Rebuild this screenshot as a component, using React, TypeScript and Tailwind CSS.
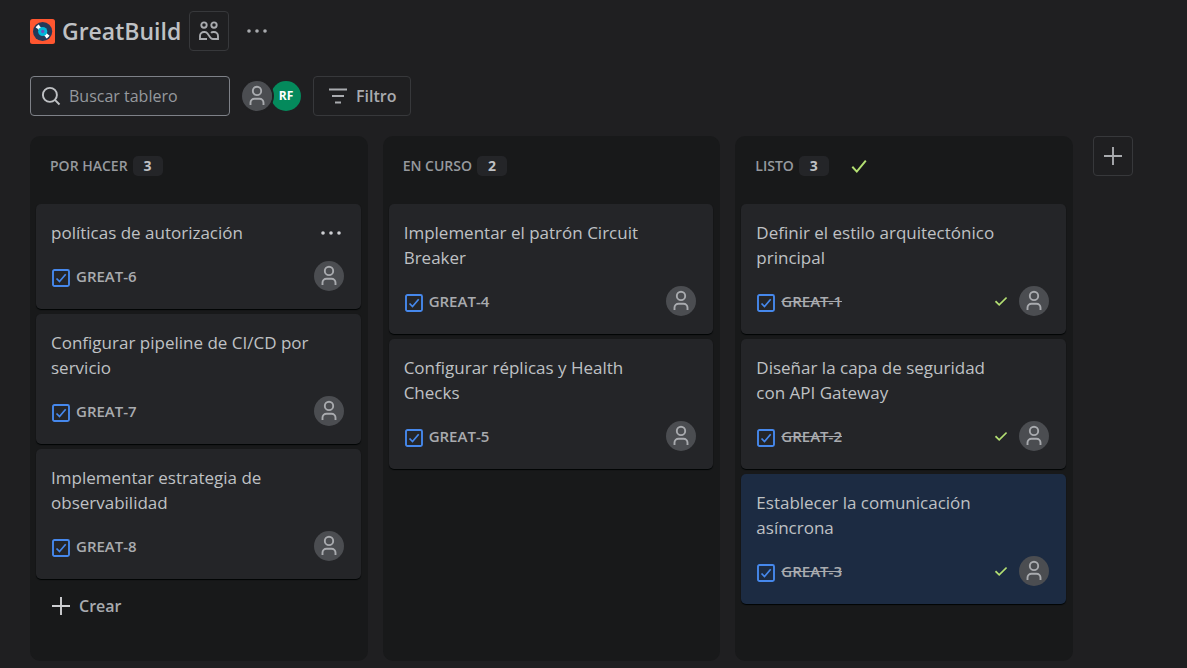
import React from "react";

type Task = { title: string; id: string; done?: boolean; selected?: boolean; menu?: boolean };
type Column = { name: string; tasks: Task[]; done?: boolean; create?: boolean };

const columns: Column[] = [
  {
    name: "POR HACER",
    create: true,
    tasks: [
      { title: "políticas de autorización", id: "GREAT-6", menu: true },
      { title: "Configurar pipeline de CI/CD por servicio", id: "GREAT-7" },
      { title: "Implementar estrategia de observabilidad", id: "GREAT-8" },
    ],
  },
  {
    name: "EN CURSO",
    tasks: [
      { title: "Implementar el patrón Circuit Breaker", id: "GREAT-4" },
      { title: "Configurar réplicas y Health Checks", id: "GREAT-5" },
    ],
  },
  {
    name: "LISTO",
    done: true,
    tasks: [
      { title: "Definir el estilo arquitectónico principal", id: "GREAT-1", done: true },
      { title: "Diseñar la capa de seguridad con API Gateway", id: "GREAT-2", done: true },
      { title: "Establecer la comunicación asíncrona", id: "GREAT-3", done: true, selected: true },
    ],
  },
];

function Logo() {
  return (
    <svg viewBox="0 0 25 25" className="size-[25px] shrink-0" aria-hidden="true">
      <rect width="25" height="25" rx="2.5" fill="#ff5630" />
      <circle cx="12.6" cy="12.5" r="9.6" fill="#253858" />
      <path d="M7.6 7.4 17.8 17.8" stroke="#fff" strokeWidth="3.4" />
      <path d="M6.2 8.8 9 6M16.2 19l2.8-2.800" stroke="#fff" strokeWidth="1.6" />
      <circle cx="12.7" cy="12.5" r="4.6" fill="#00b8d9" />
      <circle cx="12.7" cy="12.5" r="1.7" fill="#6554c0" />
    </svg>
  );
}

function PeopleIcon() {
  return (
    <svg viewBox="0 0 20 20" className="size-5" fill="none" stroke="currentColor" strokeWidth="1.9" aria-hidden="true">
      <circle cx="5" cy="4.1" r="2.7" />
      <circle cx="15" cy="4.1" r="2.7" />
      <path d="M8 18H1v-3a4 4 0 0 1 4-4h.8c1.2 0 2 .5 2.7 1.5l2.8 4c.7 1 1.5 1.5 2.6 1.5H19v-3a4 4 0 0 0-4-4h-.8c-.9 0-1.6.2-2.2.8" />
    </svg>
  );
}

function Dots() {
  return (
    <svg viewBox="0 0 20 4" className="h-1 w-5" fill="currentColor" aria-hidden="true">
      <circle cx="2" cy="2" r="1.8" />
      <circle cx="10" cy="2" r="1.8" />
      <circle cx="18" cy="2" r="1.8" />
    </svg>
  );
}

function SearchIcon() {
  return (
    <svg viewBox="0 0 20 20" className="size-5 shrink-0" fill="none" stroke="currentColor" strokeWidth="1.9" aria-hidden="true">
      <circle cx="8.9" cy="8.9" r="7" />
      <path d="m13.900 13.900 4.600 4.600" />
    </svg>
  );
}

function FilterIcon() {
  return (
    <svg viewBox="0 0 20 20" className="size-5" fill="none" stroke="currentColor" strokeWidth="1.9" aria-hidden="true">
      <path d="M1 3.500h18M4 10h12M7 16.500h6" />
    </svg>
  );
}

function PlusIcon() {
  return (
    <svg viewBox="0 0 20 20" className="size-5" fill="none" stroke="currentColor" strokeWidth="1.9" aria-hidden="true">
      <path d="M10 1v18M1 10h18" />
    </svg>
  );
}

function ColumnCheck() {
  return (
    <svg viewBox="0 0 16 16" className="ml-[22px] size-4" fill="none" stroke="#b3df72" strokeWidth="2" aria-hidden="true">
      <path d="M1.300 8.800 5.800 13.600 14.800 2.600" />
    </svg>
  );
}

function TaskCheck() {
  return (
    <svg viewBox="0 0 12 12" className="size-3" fill="none" stroke="#b3df72" strokeWidth="1.700" role="img" aria-label="Listo">
      <path d="M.500 6.200 4.200 9.800 11.600 2.500" />
    </svg>
  );
}

function TaskIcon() {
  return (
    <svg viewBox="-1 -1 20 20" className="mt-[3px] size-5" fill="none" stroke="#4688ec" strokeWidth="1.900" role="img" aria-label="Tarea">
      <rect x="1" y="1" width="16" height="16" rx="1.500" />
      <path d="m4.500 9.500 3 3L13.700 5.300" strokeWidth="1.700" />
    </svg>
  );
}

function Person() {
  return (
    <svg viewBox="0 0 30 30" className="size-[30px] rounded-full bg-[#4b4d51]" fill="none" stroke="#a9abaf" strokeWidth="1.900" role="img" aria-label="Sin asignar">
      <circle cx="15" cy="9.900" r="4.200" />
      <path d="M8.500 24v-2.300a4 4 0 0 1 4-4h5a4 4 0 0 1 4 4V24" />
    </svg>
  );
}

function Card({ task }: { task: Task }) {
  return (
    <li
      className={`rounded-[5px] pt-4 pr-[17px] pb-[18px] pl-[15px] shadow-[0_1px_1px_#010404] ${task.selected ? "bg-[#1c2b42]" : "bg-[#242528]"}`}
    >
      <div className="flex items-start justify-between">
        <h3 className="max-w-[260px] text-[17px] leading-[25px] text-[#bfc1c4]">{task.title}</h3>
        {task.menu && (
          <button type="button" aria-label="Más acciones" className="flex h-[25px] w-[26px] items-center justify-center text-[#cecfd2]">
            <Dots />
          </button>
        )}
      </div>
      <div className="mt-4 flex h-[30px] items-center">
        <TaskIcon />
        <a
          href="#"
          className={`ml-[5px] text-[15px] leading-5 font-semibold text-[#a9abaf] ${task.done ? "line-through" : ""}`}
        >
          {task.id}
        </a>
        <div className="ml-auto flex items-center gap-3">
          {task.done && <TaskCheck />}
          <Person />
        </div>
      </div>
    </li>
  );
}

function BoardColumn({ column }: { column: Column }) {
  return (
    <section className="rounded-[10px] bg-[#18191a] pr-[7px] pl-[6px]">
      <header className="flex h-[60px] items-center pl-[14px]">
        <h2 className="text-sm leading-5 font-semibold text-[#96999e]">{column.name}</h2>
        <span className="ml-[5px] flex h-5 w-[30px] items-center justify-center rounded-[5px] bg-[#242528] text-sm font-bold text-[#bfc1c4]">
          {column.tasks.length}
        </span>
        {column.done && <ColumnCheck />}
      </header>
      <ul className="mt-2 flex flex-col gap-[5px]">
        {column.tasks.map((task) => (
          <Card key={task.id} task={task} />
        ))}
      </ul>
      {column.create && (
        <button type="button" className="mt-[7px] flex h-10 items-center gap-2 px-[15px] text-base font-semibold text-[#a9abaf]">
          <span className="text-[#cecfd2]">
            <PlusIcon />
          </span>
          Crear
        </button>
      )}
    </section>
  );
}

export default function App() {
  return (
    <div className="flex min-h-screen flex-col bg-[#1f1f21] px-[30px] pt-[11px] pb-[7px] font-['Open_Sans','Noto_Sans',sans-serif] text-[#a9abaf]">
      <header className="flex h-10 items-center">
        <Logo />
        <h1 className="ml-[7px] text-[23px] leading-8 font-semibold text-[#bfc1c4]">GreatBuild</h1>
        <button type="button" aria-label="Equipo" className="ml-2 flex size-10 items-center justify-center rounded-[4px] border border-[#37383b]">
          <PeopleIcon />
        </button>
        <button type="button" aria-label="Más opciones" className="ml-2 flex size-10 items-center justify-center">
          <Dots />
        </button>
      </header>

      <div className="mt-[25px] flex h-10 items-center">
        <label className="flex h-10 w-[200px] items-center gap-2 rounded-[4px] border border-[#7e8188] bg-[#242528] px-[10px] text-[#bfc1c4]">
          <SearchIcon />
          <input
            type="text"
            aria-label="Buscar tablero"
            placeholder="Buscar tablero"
            className="w-full min-w-0 bg-transparent text-base outline-none placeholder:text-[#96999e]"
          />
        </label>
        <div className="ml-3 flex items-center">
          <span className="z-10 rounded-full ring-2 ring-[#1f1f21]">
            <Person />
          </span>
          <span className="-ml-px flex size-[30px] items-center justify-center rounded-full bg-[#048a5c] text-xs font-bold text-white">
            RF
          </span>
        </div>
        <button type="button" className="ml-3 flex h-10 items-center gap-2 rounded-[4px] border border-[#37383b] px-[14px] text-base font-semibold">
          <FilterIcon />
          Filtro
        </button>
      </div>

      <main className="mt-5 flex flex-1 items-stretch gap-5">
        <div className="grid max-w-[1043px] flex-1 grid-cols-3 gap-[15px]">
          {columns.map((column) => (
            <BoardColumn key={column.name} column={column} />
          ))}
        </div>
        <button
          type="button"
          aria-label="Crear columna"
          className="flex size-10 shrink-0 items-center justify-center rounded-[4px] border border-[#37383b]"
        >
          <PlusIcon />
        </button>
      </main>
    </div>
  );
}
